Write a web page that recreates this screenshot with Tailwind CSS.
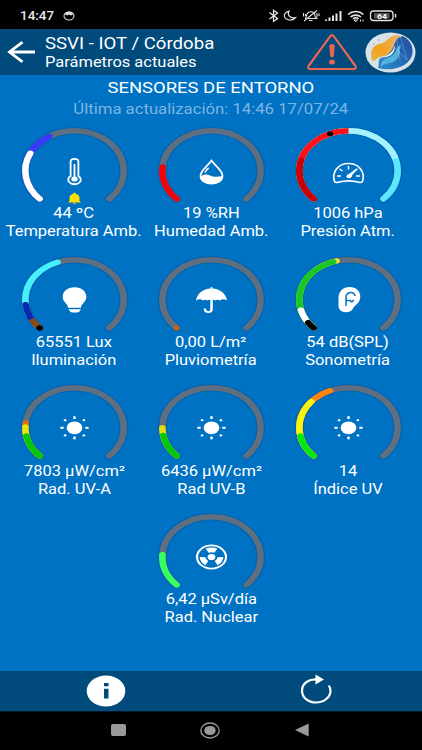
<!DOCTYPE html>
<html lang="es">
<head>
<meta charset="utf-8">
<title>SSVI - IOT</title>
<script src="https://cdn.jsdelivr.net/npm/@tailwindcss/browser@4"></script>
</head>
<body class="w-[422px] h-[750px] overflow-hidden bg-black text-white font-[Roboto,sans-serif] flex flex-col">
<div class="h-[29px] shrink-0 bg-black flex items-center pl-[20px] pr-[25px] pt-[2px] text-[#e8e8e8]">
  <span class="text-[12px] leading-4 font-medium w-[43px]"><span class="inline-block origin-left scale-x-[1.12]">14:47</span></span>
  <svg class="w-[12px] h-[10px]" viewBox="0 0 12 10"><ellipse cx="6" cy="5" rx="5" ry="4" fill="none" stroke="#ddd" stroke-width="1.1"/><path d="M1.5 2.2Q6 -1 10.5 2.2L9 4.3H7L6 3.4 5 4.3H3Z" fill="#ddd"/></svg>
  <svg class="ml-auto w-[129px] h-[14px]" viewBox="268 9 129 14" fill="none" stroke="#e4e4e4" stroke-width="1.3">
    <path d="M269.5 12.5l8 6.300-4 2.500V10.500l4 2.500-8 6"/>
    <path d="M289 11.200c-3.500.8-5.300 3.300-4.500 5.500 1.200 4 8.500 4.500 11 1-4 1-9-2-6.500-6.500z" stroke-width="1.2"/>
    <path d="M305 18.500c2-1.500 1-5 3.500-6.300 2-1 5-.5 6 1.300l.7 3.500 1.600 1.500h-9M309 20.500h3.500M304 21l13-10.500M303.500 13v3.500M305.500 14v2M317 13v4M319 13.500v2.500" stroke-width="1.1"/>
    <path d="M326 19.500v1.500M329.500 17.500v3.500M333 15.500v5.500M336.500 13.500v7.500M340.500 11v10" stroke-width="2"/>
    <path d="M348 14.500c4.500-4 11-4 15.500 0M350.500 17c3-2.500 7.500-2.500 10.500 0M353 19c1.500-1.500 4-1.500 5.500 0" stroke-width="1.6"/>
    <path d="M354 20h3.500l-1.700 1.500zM360.500 19.500v2M363 19.500v2" stroke-width="1"/>
    <rect x="370.500" y="11" width="22.500" height="9.500" rx="3"/>
    <rect x="374" y="13" width="15.500" height="5.500" fill="#555" stroke="none"/>
    <path d="M395.500 14v3.500" stroke-width="1.500"/>
    <text x="377" y="18.500" font-size="7.500" font-weight="700" textLength="10" lengthAdjust="spacingAndGlyphs" fill="#fff" stroke="none">64</text>
  </svg>
</div>
<header class="h-[46px] shrink-0 bg-[#004a7c] flex items-center pl-[7px] pr-[6px]">
  <svg class="w-[28px] h-[24px]" viewBox="0 0 28 24" fill="none" stroke="#fff" stroke-width="2.800"><path d="M28 12H2M15.500 2.200L2.500 12l13 9.800"/></svg>
  <div class="ml-[10px] flex-1 whitespace-nowrap">
    <div class="text-[15.700px] leading-[19px]"><span class="inline-block origin-left scale-x-[1.187]">SSVI - IOT / Córdoba</span></div>
    <div class="text-[14.200px] leading-[18px]"><span class="inline-block origin-left scale-x-[1.16]">Parámetros actuales</span></div>
  </div>
  <svg class="w-[50px] h-[36px] mr-[8px]" viewBox="0 0 50 36"><path d="M23.300 2.200Q25 0 26.700 2.200L48.500 32Q49.500 35 46.500 35H3.500Q.5 35 1.500 32Z" fill="none" stroke="#ea6553" stroke-width="2.200"/><path d="M22.300 12q0-2 2.700-2t2.700 2l-.9 10.500q-1.800 1.500-3.600 0z" fill="#ea6553"/><ellipse cx="25" cy="28" rx="3" ry="2.500" fill="#ea6553"/></svg>
  <svg class="w-[51px] h-[41px]" viewBox="0 0 51 41">
    <defs><linearGradient id="o" x1="0" y1="1" x2="1" y2="0"><stop stop-color="#e2b64e"/><stop offset=".35" stop-color="#f3a11c"/><stop offset="1" stop-color="#e9b465"/></linearGradient><linearGradient id="b" x1="0" y1="1" x2="1" y2="0"><stop stop-color="#2c8ed0"/><stop offset=".6" stop-color="#2463b2"/><stop offset="1" stop-color="#214f9a"/></linearGradient></defs>
    <ellipse cx="25.500" cy="20.500" rx="25" ry="20" fill="#d9e2e8"/>
    <path d="M13 36C15 31 12 28 16 26 25 23 27 16 30 10c2-6 7-7 11-4 8 6 9 17 2 24-7 7-21 9-30 6z" fill="url(#b)"/>
    <path d="M7 29C5 21 6 14 14 12c8-1 9-8 17-9 3 0 5 1 6 2-5 0-7 3-8 8-2 7-7 11-14 12-4 1-4 4-8 4z" fill="url(#o)"/>
    <path d="M16 34c0-4 3-7 9-9 7-3 6-12 11-12-2 5 0 12-6 16-5 3-9 2-14 5z" fill="#51b2dc"/>
    <path d="M16 25c8-1 12-5 14-12 0 8-4 13-14 12z" fill="#e8f0f3"/>
    <path d="M16 34l11-21 15 15M27 13l8-9 7 24M31 4l4 24" fill="none" stroke="#cde4f1" stroke-width=".5" opacity=".6"/>
    <g fill="#8c9dab"><circle cx="9" cy="12" r=".7"/><circle cx="14" cy="8" r=".7"/><circle cx="22" cy="4" r=".6"/></g>
  </svg>
</header>
<main class="flex-1 min-h-0 bg-[#0072c4] flex flex-col items-center whitespace-nowrap">
  <h1 class="mt-[3px] text-[15.500px] leading-[20px]"><span class="inline-block scale-x-[1.19]">SENSORES DE ENTORNO</span></h1>
  <p class="mt-[2px] text-[14.200px] leading-[18px] text-[#7db5e2]"><span class="inline-block scale-x-[1.177]">Última actualización: 14:46 17/07/24</span></p>
  <section id="grid" class="mt-[4px] w-[411px] flex flex-wrap justify-center gap-y-[10.500px]"></section>
</main>
<footer class="h-[40px] shrink-0 bg-[#004a7c] grid grid-cols-2 place-items-center">
  <svg class="w-[40px] h-[32px]" viewBox="0 0 40 32"><ellipse cx="20" cy="16" rx="19.300" ry="15.500" fill="#fff"/><path d="M18 8h4.500v3.200H18zM18 13.700h4.500V23.500H18z" fill="#004a7c"/></svg>
  <svg class="w-[34px] h-[32px] mr-[1px] -mt-[3px]" viewBox="0 0 34 32"><path d="M18.500 5.500C10 4.500 3 9.500 3 16.500 3 23.500 9 28.500 17 28.500S31.500 23 31.500 17q0-3-1.700-5.500" fill="none" stroke="#fff" stroke-width="2.200"/><path d="M16.500 0.500L25 5.500 16.500 10.500z" fill="#fff"/></svg>
</footer>
<nav class="h-[39px] shrink-0 bg-black border-t border-[#00192b] flex items-center pl-[111px]">
  <div class="w-[15px] h-[12px] rounded-[2px] bg-[#999] -mt-[2px]"></div>
  <svg class="ml-[74px] w-[20px] h-[17px] -mt-[2px]" viewBox="0 0 20 17"><ellipse cx="10" cy="8.500" rx="9.200" ry="7.500" fill="none" stroke="#999" stroke-width="1.300"/><ellipse cx="10" cy="8.500" rx="5.700" ry="4.600" fill="#999"/></svg>
  <svg class="ml-[75px] w-[14px] h-[14px] -mt-[2px]" viewBox="0 0 14 14"><path d="M13.700 0.500v13L0 7z" fill="#999"/></svg>
</nav>
<script>
const rays = [0,45,90,135,180,225,270,315].map(a => `<path d="M${a % 90 ? 9.8 : 8.8} 0h${a % 90 ? 2 : 2.7}" transform="rotate(${a})"/>`).join('');
const sun = `<g transform="translate(68.5 48.800) scale(1.23 1)" stroke="#fff" stroke-width="2"><circle r="6.400" fill="#fff" stroke="none"/>${rays}</g>`;
const icons = {
  temp: `<g fill="none" stroke="#fff"><path d="M64.600 54V39.500q0-2.700 3.900-2.700t3.900 2.700V54c2.500 1.500 3 4 1.500 6-2.500 3-8.300 3-10.800 0-1.500-2-1-4.500 1.500-6z" stroke-width="1.800"/><path d="M68.500 42v14" stroke-width="1.800"/></g><ellipse cx="68.500" cy="57" rx="3.200" ry="2.600" fill="#fff"/><path d="M62 80.500l1.500-1.500v-3q.3-3.500 4-4.200v-.8q1-1 2 0v.8q3.700.7 4 4.200v3l1.500 1.500zM66.800 81.300h3.400q-1.700 1.800-3.400 0z" fill="#ffe000"/>`,
  drop: `<path d="M68.500 38.500C64 45 57.500 48.500 57.500 54c0 4.500 5 7.700 11 7.700s11-3.200 11-7.700c0-5.500-6.500-9-11-15.500z" fill="none" stroke="#fff" stroke-width="1.700"/><path d="M58 54.500c3-2.500 6-2.500 9-1s8 1.500 12 .5c0 4-4.500 7.500-10.500 7.500S58 58.500 58 54.500z" fill="#fff"/><path d="M62 50.500q1-2.800 3.700-4.500" fill="none" stroke="#fff" stroke-width="1.500"/>`,
  meter: `<g fill="none" stroke="#fff" stroke-width="1.500"><path d="M54.500 59.500C51.500 50 58 41.500 68.500 41.500S85.500 50 82.500 59.500q-1.500 1.500-3.500.8-10.500-3-21 0-2 .7-3.500-.8z" stroke-width="1.700"/><path d="M57 54h4M76 54h4M59.500 46.800l3 2.200M68.500 44v3.500M77.500 46.800L70 53.500"/><path d="M76 47L70.500 55.500 67.500 53.500z" fill="#fff" stroke-width=".5"/></g><ellipse cx="69" cy="54.300" rx="2.500" ry="2" fill="#fff"/>`,
  bulb: `<path d="M62 56.700c0-4-5.300-5.500-5.300-11 0-5.500 5-9.500 11.800-9.500s11.800 4 11.800 9.500c0 5.500-5.300 7-5.300 11zM62.500 58.300H75q-1.500 3.200-4 3.200h-4.500q-2.500 0-4-3.200z" fill="#fff"/>`,
  umbrella: `<path d="M67.700 36h1.600v1.500C77 38 83 42.500 84 49.500q-4-2.500-7 0-2.500-1.500-4.500 0-1.500-1-2.700-.5v9.500c0 4.700-9 4.700-9 0v-1h2.200c0 3.500 4.300 3.500 4.300 .5v-9q-1.700-.5-2.800 .5-2-1.500-4.500 0-3-2.500-7 0C54 42.500 60 38 67.700 37.500z" fill="#fff"/>`,
  ear: `<path d="M58.500 47c0-6.500 4.500-11 11-11S80.300 40 80.300 45.500c0 7-5.300 8-7.300 12-1.200 2.500-3.500 3.700-7 3.700-4.500 0-7.500-2.500-7.500-6.700z" fill="#fff"/><path d="M66 55V46.500c0-6 9-6.500 9-1.500M66 49.500h4.500q1 3 3.200-.5" fill="none" stroke="#0072c4" stroke-width="1.500"/>`,
  sun,
  nuclear: `<g transform="translate(68.5 49) scale(1.25 1)"><circle r="11.600" fill="none" stroke="#fff" stroke-width="1.700"/><circle r="3.100" fill="#fff"/>${[0,120,240].map(a => `<path transform="rotate(${a})" d="M-2.200 -4.300L-4.700 -8.300Q0 -10.700 4.700 -8.300L2.200 -4.300Q0 -5.400 -2.200 -4.300z" fill="#fff"/>`).join('')}</g>`
};
// Segments are [end angle, colour], painted from the longest to the shortest.
const sensors = [
  ['44 ºC','Temperatura Amb.','temp',[[104,'#3838ff'],[71,'#fff']]],
  ['19 %RH','Humedad Amb.','drop',[[50,'#f80008']]],
  ['1006 hPa','Presión Atm.','meter',[[270,'#58e8ff'],[207,'#a4f2ff','butt'],[135,'#ff1016','butt'],[60,'#c80008']],113],
  ['65551 Lux','Iluminación','bulb',[[115,'#44efff'],[38,'#0828b0'],[13,'#894b12'],[0.1,'#000']]],
  ['0,00 L/m²','Pluviometría','umbrella',[[0.1,'#b4662c']]],
  ['54 dB(SPL)','Sonometría','ear',[[121,'#e8e830'],[117,'#18c827'],[30,'#fff'],[10,'#000']]],
  ['7803 µW/cm²','Rad. UV-A','sun',[[52,'#d8750c'],[46,'#e4e510'],[33,'#00c80c']]],
  ['6436 µW/cm²','Rad UV-B','sun',[[45,'#e2df10'],[34,'#00c80c']]],
  ['14','Índice UV','sun',[[113,'#ff8410'],[86,'#f8f410'],[33,'#00e810']]],
  ['6,42 µSv/día','Rad. Nuclear','nuclear',[[48,'#38ff60']]]
];
const arc = 'M-28.300 28.300A40 40 0 1 1 28.300 28.300';
document.getElementById('grid').innerHTML = sensors.map(([v,n,i,s,dot]) => `
<article class="w-[137px] flex flex-col items-center text-[14.200px] leading-[18px]">
  <svg class="w-[137px] h-[82.200px] overflow-visible" viewBox="0 0 137 82.200">
    <g transform="translate(68.5 48.700) scale(1.23 1)" fill="none" stroke-linecap="round">
      <path d="${arc}" stroke="#003a70" stroke-opacity=".12" stroke-width="8"/>
      <path d="${arc}" stroke="#003a70" stroke-opacity=".2" stroke-width="6.500"/>
      <path d="${arc}" stroke="#5d6f80" stroke-width="5.300"/>
      ${s.map(([e,c,cap]) => `<path d="${arc}" pathLength="270" stroke="${c}" stroke-width="5.300" stroke-linecap="${cap || 'round'}" stroke-dasharray="${e} 400"/>`).join('')}
      ${dot ? '<circle cx="-15" cy="-37" r="2.500" fill="#000"/>' : ''}
    </g>${icons[i]}
  </svg>
  <div><span class="inline-block scale-x-[1.16]">${v}</span></div>
  <div><span class="inline-block scale-x-[1.16]">${n}</span></div>
</article>`).join('');
</script>
</body>
</html>
